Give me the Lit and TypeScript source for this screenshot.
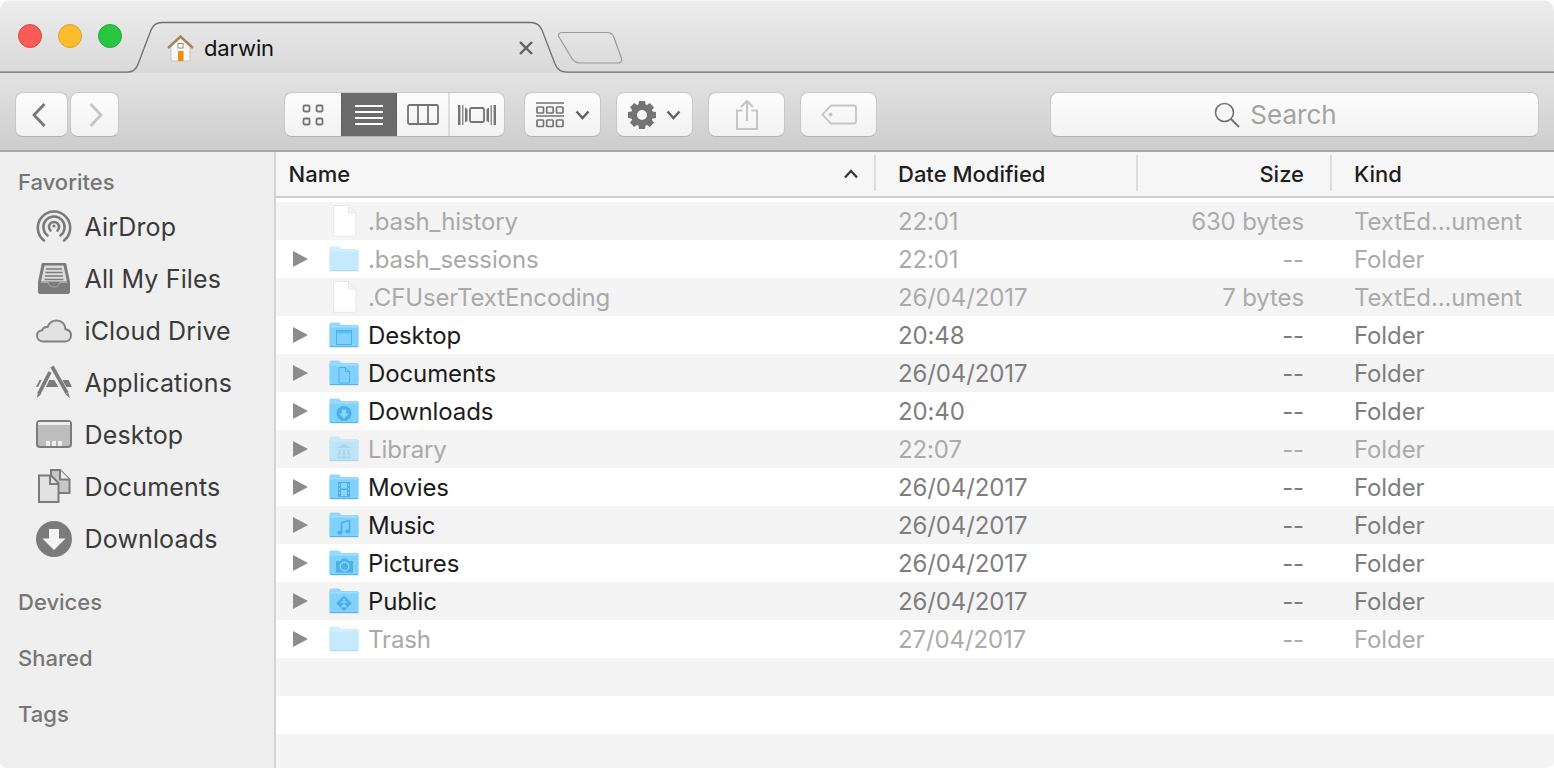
import { LitElement, html, css, svg } from "lit";
import { customElement } from "lit/decorators.js";

type Row = { n: string; d: string; s: string; k: string; dim?: boolean; kind: "file" | "folder"; g?: string };

const rows: Row[] = [
  { n: ".bash_history", d: "22:01", s: "630 bytes", k: "TextEd...ument", dim: true, kind: "file" },
  { n: ".bash_sessions", d: "22:01", s: "--", k: "Folder", dim: true, kind: "folder" },
  { n: ".CFUserTextEncoding", d: "26/04/2017", s: "7 bytes", k: "TextEd...ument", dim: true, kind: "file" },
  { n: "Desktop", d: "20:48", s: "--", k: "Folder", kind: "folder", g: "desktop" },
  { n: "Documents", d: "26/04/2017", s: "--", k: "Folder", kind: "folder", g: "doc" },
  { n: "Downloads", d: "20:40", s: "--", k: "Folder", kind: "folder", g: "down" },
  { n: "Library", d: "22:07", s: "--", k: "Folder", dim: true, kind: "folder", g: "lib" },
  { n: "Movies", d: "26/04/2017", s: "--", k: "Folder", kind: "folder", g: "movie" },
  { n: "Music", d: "26/04/2017", s: "--", k: "Folder", kind: "folder", g: "music" },
  { n: "Pictures", d: "26/04/2017", s: "--", k: "Folder", kind: "folder", g: "pic" },
  { n: "Public", d: "26/04/2017", s: "--", k: "Folder", kind: "folder", g: "pub" },
  { n: "Trash", d: "27/04/2017", s: "--", k: "Folder", dim: true, kind: "folder" },
];

const G = "#4ab0e8";
const L = "#8bd5fb";
const glyphs: Record<string, unknown> = {
  desktop: svg`<rect x="7.5" y="8.500" width="15" height="14" fill="none" stroke="${G}" stroke-width="1"/><rect x="8" y="9" width="14" height="2.500" fill="${G}" opacity=".6"/>`,
  doc: svg`<path d="M10 7.500h6.500l4 4v11.500H10z M16.500 7.500v4h4" fill="none" stroke="${G}" stroke-width="1"/>`,
  down: svg`<circle cx="15" cy="15.500" r="7.500" fill="${G}"/><path d="M12.800 11.500h4.400v4h2.800L15 20.500l-5-5h2.800z" fill="${L}"/>`,
  lib: svg`<path d="M15 8l7.500 4H7.500z M8 20.500h14v2H8z M9.500 13.500h2v6h-2z M14 13.500h2v6h-2z M18.500 13.500h2v6h-2z" fill="${G}"/>`,
  movie: svg`<path d="M9 8h12v15H9z" fill="${G}"/><path d="M12 9h6v5.500h-6z M12 16h6v6h-6z" fill="${L}"/><path d="M10 10h1v2h-1z M10 14h1v2h-1z M10 18h1v2h-1z M19 10h1v2h-1z M19 14h1v2h-1z M19 18h1v2h-1z" fill="${L}"/>`,
  music: svg`<path d="M12.500 20.500v-10l8-2v11" fill="none" stroke="${G}" stroke-width="1.600"/><ellipse cx="10.800" cy="20.800" rx="2.600" ry="2" fill="${G}"/><ellipse cx="18.800" cy="19.600" rx="2.600" ry="2" fill="${G}"/>`,
  pic: svg`<path d="M7 11h4.500l1.500-2.500h5l1.500 2.500H24v11.500H7z" fill="${G}"/><circle cx="15.500" cy="16.500" r="4.300" fill="none" stroke="${L}" stroke-width="1.400"/>`,
  pub: svg`<path d="M15 7.500l8 7.800-8 7.800-8-7.800z" fill="${G}"/><path d="M15 10.500v9 M12 14.500l3-1.500 3 1.500 M15 16.500l-2.500 3 M15 16.500l2.500 3" fill="none" stroke="${L}" stroke-width="1.200"/>`,
};

function folder(g?: string) {
  return html`<svg class="fold" width="30" height="26" viewBox="0 0 30 26">
    <path d="M.5 4V2.200C.5 1 1.200.5 2.200.5h7c.8 0 1.200.3 1.700.9L12.600 3H28c1 0 1.700.7 1.700 1.700V6H.5z" fill="#93d8fc"/>
    <path d="M.3 4.600h29.400V22.600c0 1-.7 1.600-1.600 1.600H1.900c-1 0-1.600-.6-1.600-1.600z" fill="#80d2fc"/>
    <path d="M.3 4.400h29.400v1H.3z" fill="#ace3fd"/>
    <path d="M.6 24h28.800v1.200H.6z" fill="#5cb3e2"/>
    ${g ? glyphs[g] : ""}
  </svg>`;
}

function fileIcon() {
  return html`<svg class="fold file" width="30" height="34" viewBox="0 0 30 34">
    <path d="M4.500 1.500h15l7.500 7.500v22c0 .8-.5 1.300-1.300 1.300H5.800c-.8 0-1.300-.5-1.300-1.300z" fill="#fff" stroke="#e6e6e6" stroke-width="1"/>
    <path d="M19.500 1.500V9H27z" fill="#f4f4f4" stroke="#e8e8e8" stroke-width="1"/>
  </svg>`;
}

const sideIcons: Record<string, unknown> = {
  air: svg`<g fill="none" stroke="#7b7b7b" stroke-width="2.600" stroke-linecap="round">
      <path d="M8 31.500A16.200 16.200 0 1 1 28 31.500"/><path d="M11.500 26.500A10.600 10.600 0 1 1 24.500 26.500"/><path d="M14.500 21.500A5 5 0 1 1 21.500 21.500"/></g>
      <circle cx="18" cy="17" r="1.600" fill="#7b7b7b"/>`,
  files: svg`<path d="M7 2h22c.8 0 1.200.4 1.400 1.200L34 21v10c0 1.200-.8 2-2 2H4c-1.200 0-2-.8-2-2V21L5.600 3.200C5.800 2.400 6.200 2 7 2z" fill="#7b7b7b"/>
      <path d="M8.500 4.500h19L31 20.500H5z" fill="#dcdcdc"/>
      <path d="M10 8h16M9.500 11.500h17M9 15h18M8.500 18.500h19" stroke="#7b7b7b" stroke-width="1.600"/>
      <path d="M5 21.500h7.500c.3 3 2 4.500 5.500 4.500s5.200-1.500 5.500-4.500H31" fill="none" stroke="#a8a8a8" stroke-width="1"/>`,
  cloud: svg`<path d="M7.500 28.500C3.500 28.500 1 26 1 22.800c0-3 2.200-5.200 5.200-5.500 .8-2.500 3-3.700 5.300-3.200C13.200 10 16.500 7.500 20.500 7.500c5.200 0 9 3.700 9 8.800 3.500.6 5.500 3.100 5.500 6.200 0 3.500-2.500 6-6.300 6z" fill="#e2e2e2" stroke="#828282" stroke-width="2"/>`,
  apps: svg`<path d="M3.500 15h29L36 22H0z" fill="#7b7b7b"/>
      <path d="M1 32L14 6 M32 32L15 2" stroke="#efefef" stroke-width="7"/>
      <path d="M3 28.500L14 7" stroke="#7b7b7b" stroke-width="3.600" fill="none"/>
      <path d="M16 1.500L31 28" stroke="#7b7b7b" stroke-width="3.600" fill="none"/>
      <path d="M1 33l.8-5.500 3.200 1.700z M34 33l-4.500-3.500 2.800-2z" fill="#7b7b7b"/>`,
  desk: svg`<rect x="1" y="4" width="34" height="26" rx="3" fill="#bdbdbd" stroke="#7b7b7b" stroke-width="2"/>
      <path d="M2 5h32v3H2z" fill="#eeeeee"/>
      <path d="M10 24h16v5H10z" fill="#efefef"/><path d="M15 24v5M21 24v5" stroke="#9b9b9b" stroke-width="1.400"/>`,
  docs: svg`<path d="M15 1h9l9.500 9.500V24H15z" fill="#c7c7c7" stroke="#7b7b7b" stroke-width="2"/>
      <path d="M24 1v9.500h9.500" fill="#efefef" stroke="#7b7b7b" stroke-width="2"/>
      <path d="M3 6.500h12L22.500 14v19H3z" fill="#e2e2e2" stroke="#7b7b7b" stroke-width="2"/>
      <path d="M14 7v8h8.500" fill="none" stroke="#7b7b7b" stroke-width="2"/>`,
  dl: svg`<circle cx="18" cy="18" r="18" fill="#7b7b7b"/><path d="M13 8h10v9.500h6.500L18 29 6.500 17.500H13z" fill="#f4f4f4"/>`,
};

const favs = [
  ["air", "AirDrop"], ["files", "All My Files"], ["cloud", "iCloud Drive"], ["apps", "Applications"],
  ["desk", "Desktop"], ["docs", "Documents"], ["dl", "Downloads"],
];

const gearTeeth = [0, 45, 90, 135, 180, 225, 270, 315];

@customElement("app-root")
export class AppRoot extends LitElement {
  static styles = css`
    :host { display: block; width: 1554px; height: 768px; background: #fff; font-family: Inter, "Liberation Sans", sans-serif; font-size: 24px; }
    .win { width: 1554px; height: 768px; display: flex; flex-direction: column; overflow: hidden; border-radius: 10px 10px 6px 6px; background: #fff; }
    .tabbar { position: relative; height: 73px; flex: none; display: flex; align-items: flex-start; background: linear-gradient(#ededed, #d9d9d9); border-top: 1px solid #f6f6f6; box-sizing: border-box; }
    .outline { position: absolute; left: 0; top: -1px; }
    .lights { display: flex; gap: 16px; padding: 23px 0 0 18px; position: relative; }
    .light { width: 22px; height: 22px; border-radius: 50%; border: 1px solid; }
    .r { background: #fc5b57; border-color: #e2463f; }
    .y { background: #fdbc2e; border-color: #e0a028; }
    .g { background: #27c83f; border-color: #20ab35; }
    .tab { position: relative; display: flex; align-items: center; width: 367px; margin-left: 45px; height: 48px; margin-top: 23px; }
    .tab-name { margin-left: 10px; color: #111; font-size: 22px; letter-spacing: -0.1px; flex: 1; }
    .toolbar { height: 79px; flex: none; box-sizing: border-box; display: flex; align-items: flex-start; padding: 19px 0 0 15px; background: linear-gradient(#e3e3e3, #cdcdcd); border-bottom: 2px solid #a6a6a6; }
    .btn { flex: none; height: 45px; box-sizing: border-box; display: flex; align-items: center; justify-content: center; background: linear-gradient(#fdfdfd, #f2f2f2); border: 1px solid #c8c8c8; border-bottom-color: #b4b4b4; border-radius: 8px; }
    .nav { flex: none; display: flex; gap: 2px; margin-right: 165px; }
    .b-back { width: 53px; padding-right: 6px; }
    .b-fwd { width: 49px; padding-left: 3px; }
    .seg { flex: none; display: flex; width: 221px; height: 45px; box-sizing: border-box; background: linear-gradient(#fdfdfd, #f2f2f2); border: 1px solid #c8c8c8; border-bottom-color: #b4b4b4; border-radius: 8px; overflow: hidden; margin-right: 19px; }
    .seg > div { flex: none; display: flex; align-items: center; justify-content: center; height: 100%; box-sizing: border-box; }
    .s1 { width: 56px; }
    .seg > .s2 { width: 56px; background: #6b6b6b; border: 1px solid #5f5f5f; margin-top: -1px; height: 45px; }
    .s3 { width: 53px; border-right: 2px solid #dedede; }
    .s4 { width: 54px; }
    .wide { width: 77px; margin-right: 15px; gap: 10px; }
    .arr { gap: 11px; }
    .search { width: 489px; margin-left: 158px; gap: 10px; padding-right: 38px; color: #a3a3a3; font-size: 26px; }
    .body { flex: 1; display: flex; min-height: 0; }
    .side { width: 276px; flex: none; box-sizing: border-box; background: #efefef; border-right: 2px solid #d3d3d3; padding-top: 16px; }
    .sect { height: 28px; line-height: 28px; padding-left: 18px; color: #767676; font-size: 22px; font-weight: 500; }
    .favs { margin-top: 5px; margin-bottom: 23px; }
    .item { display: flex; align-items: center; height: 52px; padding-left: 36px; color: #3a3a3a; font-size: 25px; letter-spacing: 0.15px; }
    .item svg { margin-right: 12.5px; flex: none; }
    .sect2 { margin-bottom: 28px; }
    .main { flex: 1; min-width: 0; display: flex; flex-direction: column; }
    .cols { display: grid; grid-template-columns: 600px 262px 194px 1fr; }
    .head { height: 46px; box-sizing: border-box; background: #f6f6f6; border-bottom: 2px solid #cdcdcd; font-weight: 500; color: #1e1e1e; font-size: 22px; flex: none; }
    .hc { display: flex; align-items: center; height: 43px; box-sizing: border-box; position: relative; }
    .hc::after { content: ""; position: absolute; right: 0; top: 3px; bottom: 4px; width: 2px; background: #dddddd; }
    .hc:last-child::after { display: none; }
    .hname { padding-left: 12.5px; justify-content: space-between; padding-right: 17px; }
    .pl { padding-left: 22px; }
    .pr { justify-content: flex-end; padding-right: 28px; }
    .list { margin-top: 4px; flex: 1; }
    .row { height: 38px; align-items: center; font-size: 24px; letter-spacing: -0.12px; color: #7e7e7e; }
    .row:nth-child(odd) { background: #f4f4f4; }
    .row:nth-child(even) { background: #fff; }
    .cell { display: flex; align-items: center; height: 38px; white-space: nowrap; }
    .namecell { color: #1c1c1c; }
    .tri { width: 15px; height: 16px; margin: 0 21px 0 17px; flex: none; }
    .notri { width: 53px; flex: none; }
    .fold { flex: none; margin-right: 9px; }
    .dim { color: #ababab; }
    .dim .namecell { color: #a9a9a9; }
    .dim .fold:not(.file) { opacity: .45; }
    .num { justify-content: flex-end; padding-right: 28px; }
    .empty { height: 38px; }
  `;

  render() {
    return html`<div class="win">
      <div class="tabbar">
        <svg class="outline" width="1554" height="73" viewBox="0 0 1554 73">
          <path d="M0 72.200H127c6 0 9-2.500 11-8L151 30c2-5 5-7.500 11-7.500H531c6 0 9 3 11 7.500l13 34c2 5 6 8.200 12 8.200H1554" fill="none" stroke="#6e6e6e" stroke-width="1.300"/>
          <path d="M562 32.500H607c4 0 6 2 7 5l7.500 21c.8 2.500-.5 4.500-3 4.500H580c-4.500 0-7-2-9-6l-12-20c-1.200-2.500 0-4.500 3-4.500z" fill="none" stroke="#9a9a9a" stroke-width="1.200"/>
        </svg>
        <div class="lights"><div class="light r"></div><div class="light y"></div><div class="light g"></div></div>
        <div class="tab">
          <svg width="27" height="27" viewBox="0 0 27 27">
            <path d="M4 11.500L13.500 3 23 11.500V26H4z" fill="#f7f7f7" stroke="#c4c4c4" stroke-width="1"/>
            <path d="M1 13L13.500 1.500 26 13" fill="none" stroke="#a88558" stroke-width="2.400"/>
            <rect x="11" y="8.500" width="5" height="4.500" fill="#fff" stroke="#9a8a74" stroke-width="1"/>
            <rect x="11" y="16" width="5.500" height="10" fill="#ee8d10"/>
          </svg>
          <span class="tab-name">darwin</span>
          <svg width="16" height="16" viewBox="0 0 16 16"><path d="M2 2l12 12M14 2L2 14" stroke="#606060" stroke-width="2.400"/></svg>
        </div>
      </div>

      <div class="toolbar">
        <div class="nav">
          <div class="btn b-back"><svg width="16" height="26" viewBox="0 0 16 26"><path d="M13.500 2L3 13l10.500 11" fill="none" stroke="#787878" stroke-width="2.800"/></svg></div>
          <div class="btn b-fwd"><svg width="16" height="26" viewBox="0 0 16 26"><path d="M2.500 2L13 13 2.500 24" fill="none" stroke="#c6c6c6" stroke-width="2.800"/></svg></div>
        </div>
        <div class="seg">
          <div class="s1"><svg width="22" height="22" viewBox="0 0 22 22"><g fill="none" stroke="#747474" stroke-width="1.800"><rect x="1.500" y="1.500" width="6" height="6" rx="1.200"/><rect x="14.500" y="1.500" width="6" height="6" rx="1.200"/><rect x="1.500" y="14.500" width="6" height="6" rx="1.200"/><rect x="14.500" y="14.500" width="6" height="6" rx="1.200"/></g></svg></div>
          <div class="s2"><svg width="28" height="20" viewBox="0 0 28 20"><path d="M0 1h28M0 7h28M0 13h28M0 19h28" stroke="#fff" stroke-width="1.800"/></svg></div>
          <div class="s3"><svg width="32" height="21" viewBox="0 0 32 21"><path d="M2.500 1h27c.8 0 1.500.7 1.500 1.500v16c0 .8-.7 1.500-1.500 1.500h-27c-.8 0-1.500-.7-1.500-1.500v-16C1 1.700 1.700 1 2.500 1zM11 1v19M21 1v19" fill="none" stroke="#747474" stroke-width="1.800"/></svg></div>
          <div class="s4"><svg width="38" height="22" viewBox="0 0 38 22"><g fill="none" stroke="#747474"><rect x="12" y="4" width="14" height="14" rx="1.500" stroke-width="1.800"/><path d="M1.200 1v20M36.800 1v20" stroke-width="2.400"/><path d="M4.800 1v20M33.200 1v20" stroke-width="1.200"/></g><path d="M7 3.500l2.500 1.800v11.400L7 18.500zM31 3.500l-2.500 1.800v11.400l2.500 1.800z" fill="#747474"/></svg></div>
        </div>
        <div class="btn wide arr">
          <svg width="28" height="26" viewBox="0 0 28 26"><g fill="none" stroke="#747474" stroke-width="1.700"><path d="M0 1h28M0 14h28"/><rect x="1" y="5" width="6.500" height="6" rx=".8"/><rect x="10.700" y="5" width="6.500" height="6" rx=".8"/><rect x="20.500" y="5" width="6.500" height="6" rx=".8"/><rect x="1" y="18" width="6.500" height="6.500" rx=".8"/><rect x="10.700" y="18" width="6.500" height="6.500" rx=".8"/><rect x="20.500" y="18" width="6.500" height="6.500" rx=".8"/></g></svg>
          <svg width="15" height="10" viewBox="0 0 15 10"><path d="M1.500 1.500L7.500 8l6-6.500" fill="none" stroke="#5f5f5f" stroke-width="2.400"/></svg>
        </div>
        <div class="btn wide">
          <svg width="28" height="28" viewBox="0 0 28 28">
            <circle cx="14" cy="14" r="8" fill="none" stroke="#747474" stroke-width="6"/>
            ${gearTeeth.map((a) => svg`<path d="M11 0h6l.8 5h-7.600z" fill="#747474" transform="rotate(${a} 14 14)"/>`)}
          </svg>
          <svg width="15" height="10" viewBox="0 0 15 10"><path d="M1.500 1.500L7.500 8l6-6.500" fill="none" stroke="#5f5f5f" stroke-width="2.400"/></svg>
        </div>
        <div class="btn wide"><svg width="24" height="32" viewBox="0 0 24 32"><path d="M7.500 11.500H2v18.500h20V11.500h-5.500M12 22V2M6 8l6-6 6 6" fill="none" stroke="#c5c5c5" stroke-width="2"/></svg></div>
        <div class="btn wide"><svg width="36" height="21" viewBox="0 0 36 21"><path d="M10 1.500h23c1.200 0 2 .8 2 2v14c0 1.200-.8 2-2 2H10l-8.500-9z" fill="none" stroke="#c5c5c5" stroke-width="1.800"/><circle cx="9.500" cy="10.500" r="2" fill="#c5c5c5"/></svg></div>
        <div class="btn search">
          <svg width="26" height="26" viewBox="0 0 26 26"><circle cx="10.500" cy="10.500" r="9" fill="none" stroke="#707070" stroke-width="1.600"/><path d="M17 17l8 8" stroke="#707070" stroke-width="1.800"/></svg>
          <span>Search</span>
        </div>
      </div>

      <div class="body">
        <div class="side">
          <div class="sect">Favorites</div>
          <div class="favs">
            ${favs.map(([i, l]) => html`<div class="item"><svg width="36" height="36" viewBox="0 0 36 36">${sideIcons[i]}</svg><span>${l}</span></div>`)}
          </div>
          <div class="sect sect2">Devices</div>
          <div class="sect sect2">Shared</div>
          <div class="sect sect2">Tags</div>
        </div>
        <div class="main">
          <div class="cols head">
            <div class="hc hname"><span>Name</span><svg width="16" height="10" viewBox="0 0 16 10"><path d="M2 8.500l6-6.500 6 6.500" fill="none" stroke="#3a3a3a" stroke-width="2.300"/></svg></div>
            <div class="hc pl">Date Modified</div>
            <div class="hc pr">Size</div>
            <div class="hc pl">Kind</div>
          </div>
          <div class="list">
            ${rows.map((r) => html`<div class="cols row ${r.dim ? "dim" : ""}">
              <div class="cell namecell">
                ${r.kind === "folder"
                  ? html`<svg class="tri" viewBox="0 0 15 16"><path d="M0 0l15 8-15 8z" fill="#8c8c8c"/></svg>${folder(r.g)}`
                  : html`<div class="notri"></div>${fileIcon()}`}
                <span>${r.n}</span>
              </div>
              <div class="cell pl">${r.d}</div>
              <div class="cell num">${r.s}</div>
              <div class="cell pl">${r.k}</div>
            </div>`)}
            <div class="row empty"></div>
            <div class="row empty"></div>
            <div class="row empty"></div>
          </div>
        </div>
      </div>
    </div>`;
  }
}
